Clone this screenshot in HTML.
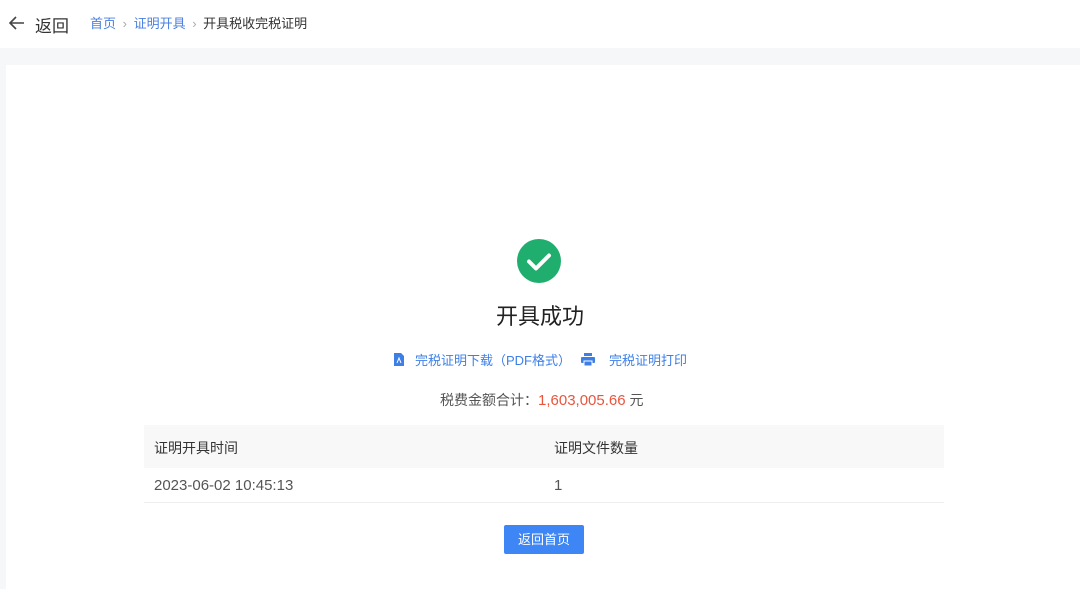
<!DOCTYPE html>
<html><head><meta charset="utf-8"><style>
body{margin:0;width:1080px;height:589px;background:#f6f7f9;font-family:"Liberation Sans","Noto Sans CJK SC",sans-serif;overflow:hidden;position:relative}
.top{position:absolute;left:0;top:0;width:1080px;height:48px;background:#fff}
.card{position:absolute;left:6px;top:65px;width:1074px;height:524px;background:#fff}
.abs{position:absolute;white-space:nowrap}
</style></head><body>
<div class="top">
<svg class="abs" style="left:8px;top:15px" width="18" height="16" viewBox="0 0 18 16"><path d="M16 8H2M8 2L2 8l6 6" fill="none" stroke="#444" stroke-width="1.6"/></svg>
<div class="abs" style="left:35px;top:12px;font-size:17px;color:#333">返回</div>
<div class="abs" style="left:90px;top:13px;font-size:13px;color:#4a7fe0">首页 <span style="color:#aaa;margin:0 3px">›</span> 证明开具 <span style="color:#aaa;margin:0 3px">›</span> <span style="color:#333">开具税收完税证明</span></div>
</div>
<div class="card"></div>
<svg class="abs" style="left:517px;top:239px" width="44" height="44" viewBox="0 0 44 44"><circle cx="22" cy="22" r="22" fill="#1fae6d"/><path d="M12 22.5l7 7 13-13" fill="none" stroke="#fff" stroke-width="4" stroke-linecap="round" stroke-linejoin="round"/></svg>
<div class="abs" style="left:0;width:1080px;text-align:center;top:299px;font-size:22px;color:#222">开具成功</div>
<svg class="abs" style="left:394px;top:353px" width="10" height="13" viewBox="0 0 10 13"><path d="M0 0h7l3 3v10H0z" fill="#3e7fe6"/><path d="M3 10l2-5 2 5" fill="none" stroke="#fff" stroke-width="1"/></svg>
<div class="abs" style="left:415px;top:350px;font-size:13px;color:#3e7fe6">完税证明下载（PDF格式）</div>
<svg class="abs" style="left:581px;top:353px" width="14" height="13" viewBox="0 0 14 13"><rect x="3" y="0" width="8" height="3" fill="#3e7fe6"/><rect x="0" y="4" width="14" height="6" rx="1" fill="#3e7fe6"/><rect x="3" y="8" width="8" height="5" fill="#3e7fe6" stroke="#fff" stroke-width="1"/></svg>
<div class="abs" style="left:609px;top:350px;font-size:13px;color:#3e7fe6">完税证明打印</div>
<div class="abs" style="left:440px;top:390px;font-size:14px;color:#555">税费金额合计：<span style="color:#e8553e;font-size:15px">1,603,005.66</span> 元</div>
<div class="abs" style="left:144px;top:425px;width:800px;height:43px;background:#f8f8f8"></div>
<div class="abs" style="left:154px;top:438px;font-size:14px;color:#333">证明开具时间</div>
<div class="abs" style="left:554px;top:438px;font-size:14px;color:#333">证明文件数量</div>
<div class="abs" style="left:144px;top:502px;width:800px;height:1px;background:#eee"></div>
<div class="abs" style="left:154px;top:477px;font-size:15px;color:#555">2023-06-02 10:45:13</div>
<div class="abs" style="left:554px;top:477px;font-size:15px;color:#555">1</div>
<div class="abs" style="left:504px;top:525px;width:80px;height:29px;background:#3e86f5;border-radius:2px;color:#fff;font-size:13px;text-align:center;line-height:29px">返回首页</div>
</body></html>
